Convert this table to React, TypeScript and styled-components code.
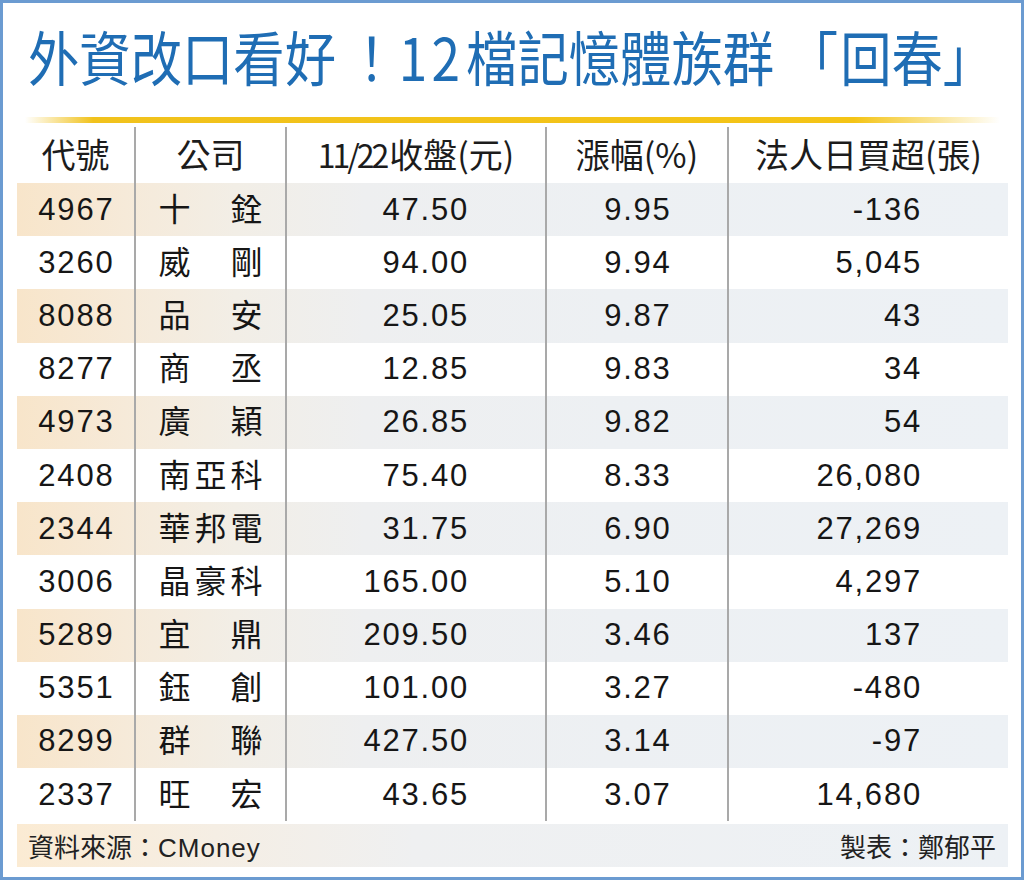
import React from "react";
import styled, { createGlobalStyle } from "styled-components";

const Global = createGlobalStyle`
  html, body { margin: 0; padding: 0; background: #ffffff; }
  body { font-family: "Liberation Sans", "Noto Sans CJK TC", sans-serif; }
`;

const Frame = styled.div`
  width: 1024px;
  height: 880px;
  box-sizing: border-box;
  border: 3px solid #6b9bd1;
  background: #ffffff;
  display: flex;
  flex-direction: column;
  padding: 0 13px 0 14px;
  overflow: hidden;
`;

const Title = styled.h1`
  margin: 21px 0 0 11px;
  font-family: "Noto Sans CJK TC", sans-serif;
  font-weight: 400;
  font-size: 59px;
  line-height: 64px;
  color: #1f6db4;
  white-space: nowrap;
  transform: scaleX(0.87);
  transform-origin: left center;
`;

const Punct = styled.span<{ $w: number; $ml?: number; $align?: string }>`
  display: inline-block;
  width: ${(p) => p.$w}px;
  margin-left: ${(p) => p.$ml ?? 0}px;
  text-align: ${(p) => p.$align ?? "center"};
`;

const TitleDigits = styled.span`
  letter-spacing: 5px;
  margin-right: 2px;
`;

const GoldBar = styled.div`
  height: 6px;
  margin: 29px 8px 0 8px;
  background: linear-gradient(
    to right,
    rgba(240, 196, 30, 0) 0%,
    #f1c21c 7%,
    #f4c416 85%,
    rgba(244, 196, 22, 0) 100%
  );
`;

const Table = styled.div`
  display: flex;
  flex-direction: column;
  margin-top: 4px;
`;

const Row = styled.div<{ $striped?: boolean; $height: number }>`
  display: grid;
  grid-template-columns: 117px 151px 260px 182px 281px;
  height: ${(p) => p.$height}px;
  background: ${(p) =>
    p.$striped
      ? "linear-gradient(to right, #f8e5ca 0%, #f6ead9 11%, #f2eee6 22%, #eeeff0 35%, #edf0f3 60%, #edf1f5 100%)"
      : "#ffffff"};
`;

const Cell = styled.div<{ $align: "left" | "center" | "right"; $pr?: number; $divider?: boolean }>`
  display: flex;
  align-items: center;
  justify-content: ${(p) =>
    p.$align === "center" ? "center" : p.$align === "right" ? "flex-end" : "flex-start"};
  padding-right: ${(p) => p.$pr ?? 0}px;
  border-left: ${(p) => (p.$divider ? "2px solid #a9a9a9" : "none")};
  min-width: 0;
`;

const HeadText = styled.span`
  font-family: "Noto Sans CJK TC", sans-serif;
  font-size: 34px;
  color: #1c1c1c;
  white-space: nowrap;
  padding-bottom: 4px;
`;

const HeadDigits = styled.span`
  font-size: 32px;
  letter-spacing: -3px;
  margin-right: 3px;
`;

const Num = styled.span<{ $lead?: boolean }>`
  font-family: "Liberation Sans", sans-serif;
  font-size: 31px;
  letter-spacing: 1.8px;
  color: #161616;
  padding-left: ${(p) => (p.$lead ? "1.8px" : "0")};
`;

const NameBox = styled.div`
  width: 104px;
  display: flex;
  justify-content: space-between;
  font-family: "Noto Sans CJK TC", sans-serif;
  font-size: 32px;
  color: #161616;
  padding-bottom: 6px;
`;

const Footer = styled.div`
  margin-top: 3px;
  height: 43px;
  display: flex;
  align-items: center;
  justify-content: space-between;
  padding: 0 12px 0 11px;
  background: linear-gradient(to right, #fbebd3 0%, #f5eee4 20%, #eff0f1 40%, #edf1f5 100%);
  font-family: "Noto Sans CJK TC", sans-serif;
  font-size: 26px;
  color: #222222;
`;

const Latin = styled.span`
  font-family: "Liberation Sans", sans-serif;
  letter-spacing: 1px;
`;

type Item = { code: string; name: string; close: string; pct: string; net: string };

const data: Item[] = [
  { code: "4967", name: "十銓", close: "47.50", pct: "9.95", net: "-136" },
  { code: "3260", name: "威剛", close: "94.00", pct: "9.94", net: "5,045" },
  { code: "8088", name: "品安", close: "25.05", pct: "9.87", net: "43" },
  { code: "8277", name: "商丞", close: "12.85", pct: "9.83", net: "34" },
  { code: "4973", name: "廣穎", close: "26.85", pct: "9.82", net: "54" },
  { code: "2408", name: "南亞科", close: "75.40", pct: "8.33", net: "26,080" },
  { code: "2344", name: "華邦電", close: "31.75", pct: "6.90", net: "27,269" },
  { code: "3006", name: "晶豪科", close: "165.00", pct: "5.10", net: "4,297" },
  { code: "5289", name: "宜鼎", close: "209.50", pct: "3.46", net: "137" },
  { code: "5351", name: "鈺創", close: "101.00", pct: "3.27", net: "-480" },
  { code: "8299", name: "群聯", close: "427.50", pct: "3.14", net: "-97" },
  { code: "2337", name: "旺宏", close: "43.65", pct: "3.07", net: "14,680" },
];

export default function App() {
  return (
    <>
      <Global />
      <Frame>
        <Title>
          外資改口看好
          <Punct $w={62} $ml={10}>！</Punct>
          <TitleDigits>12</TitleDigits>檔記憶體族群
          <Punct $w={64} $ml={12}>「</Punct>回春
          <Punct $w={52}>」</Punct>
        </Title>
        <GoldBar />
        <Table>
          <Row $height={56}>
            <Cell $align="center">
              <HeadText>代號</HeadText>
            </Cell>
            <Cell $align="center" $divider>
              <HeadText>公司</HeadText>
            </Cell>
            <Cell $align="center" $divider>
              <HeadText>
                <HeadDigits>11/22</HeadDigits>收盤(元)
              </HeadText>
            </Cell>
            <Cell $align="center" $divider>
              <HeadText>漲幅(%)</HeadText>
            </Cell>
            <Cell $align="center" $divider>
              <HeadText>法人日買超(張)</HeadText>
            </Cell>
          </Row>
          {data.map((d, i) => (
            <Row key={d.code} $height={53.2} $striped={i % 2 === 0}>
              <Cell $align="center">
                <Num $lead>{d.code}</Num>
              </Cell>
              <Cell $align="center" $divider>
                <NameBox>
                  {Array.from(d.name).map((ch, k) => (
                    <span key={k}>{ch}</span>
                  ))}
                </NameBox>
              </Cell>
              <Cell $align="right" $pr={76} $divider>
                <Num>{d.close}</Num>
              </Cell>
              <Cell $align="center" $divider>
                <Num $lead>{d.pct}</Num>
              </Cell>
              <Cell $align="right" $pr={86} $divider>
                <Num>{d.net}</Num>
              </Cell>
            </Row>
          ))}
        </Table>
        <Footer>
          <span>
            資料來源：<Latin>CMoney</Latin>
          </span>
          <span>製表：鄭郁平</span>
        </Footer>
      </Frame>
    </>
  );
}
